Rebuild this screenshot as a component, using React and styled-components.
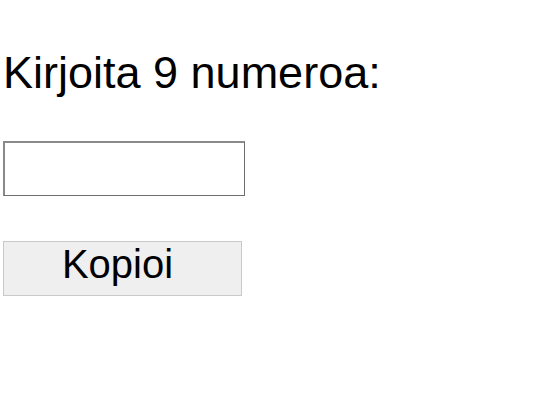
import React from "react";
import styled, { createGlobalStyle } from "styled-components";

const Global = createGlobalStyle`
  html, body { margin: 0; padding: 0; background: #ffffff; }
  body { font-family: "Liberation Sans", Arial, sans-serif; color: #000; }
`;

const Page = styled.main`
  display: flex;
  flex-direction: column;
  align-items: flex-start;
  padding: 48px 0 0 3px;
`;

const Title = styled.h1`
  margin: 0;
  font-size: 45px;
  font-weight: 400;
  line-height: 50px;
`;

const NumberInput = styled.input`
  box-sizing: border-box;
  margin-top: 43px;
  width: 242px;
  height: 55px;
  padding: 0 4px;
  border-style: solid;
  border-width: 2px 1px 1px 2px;
  border-color: #8a8a8a #6e6e6e #6e6e6e #8a8a8a;
  border-radius: 0;
  background: #fff;
  font-family: "Liberation Sans", Arial, sans-serif;
  font-size: 36px;
  outline: none;
`;

const CopyButton = styled.button`
  box-sizing: border-box;
  margin-top: 45px;
  width: 239px;
  height: 55px;
  padding: 0 10px 8px 0;
  border: 1px solid #c9c9c9;
  border-radius: 0;
  background: #efefef;
  color: #000;
  font-family: "Liberation Sans", Arial, sans-serif;
  font-size: 40px;
  line-height: 45px;
  cursor: pointer;
`;

export default function App() {
  return (
    <>
      <Global />
      <Page>
        <Title>Kirjoita 9 numeroa:</Title>
        <NumberInput type="text" aria-label="Kirjoita 9 numeroa" />
        <CopyButton type="button">Kopioi</CopyButton>
      </Page>
    </>
  );
}
